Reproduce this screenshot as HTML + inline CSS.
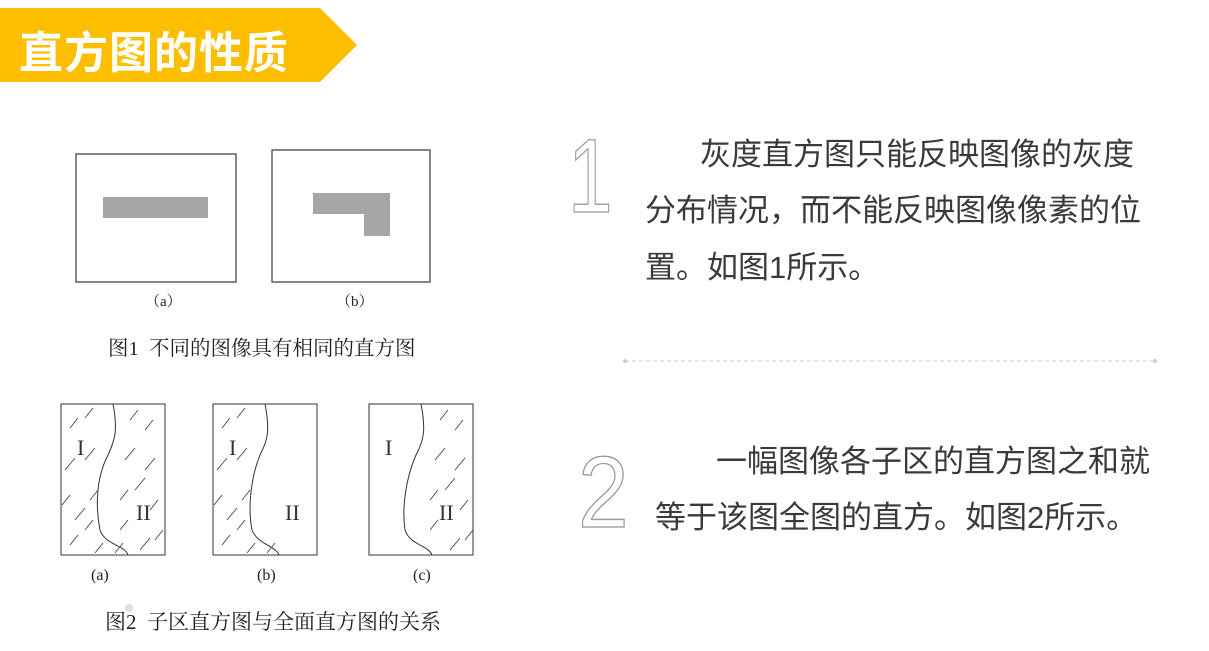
<!DOCTYPE html>
<html><head><meta charset="utf-8"><style>
body{margin:0;width:1209px;height:651px;background:#fff;position:relative;overflow:hidden;font-family:"Liberation Sans","Noto Sans CJK SC",sans-serif}
.t{position:absolute;white-space:nowrap}
.p{font-size:31px;color:#3a3a3a;line-height:31px}
.c{font-family:"Liberation Serif","Noto Serif CJK SC",serif;color:#222}
</style></head><body>
<svg width="1209" height="651" style="position:absolute;left:0;top:0">
<polygon points="0,8 320,8 357,45 320,82 0,82" fill="#FDBE00"/>
<g fill="none" stroke="#444" stroke-width="1.3">
<rect x="76" y="154" width="160" height="128"/>
<rect x="272" y="150" width="158" height="132"/>
</g>
<rect x="103" y="197" width="105" height="21" fill="#a6a6a6"/>
<rect x="313" y="193" width="51" height="21" fill="#a6a6a6"/>
<rect x="364" y="193" width="26" height="43" fill="#a6a6a6"/>
<g fill="none" stroke="#333" stroke-width="1">
<rect x="61" y="404" width="104" height="151"/>
<rect x="213" y="404" width="104" height="151"/>
<rect x="369" y="404" width="104" height="151"/>
<path d="M113,404 C118,430 115,440 108,455 C95,480 96,510 100,530 C105,545 125,545 128,555"/>
<path d="M265,404 C270,430 268,440 260,455 C250,480 248,510 252,530 C258,545 275,545 279,555"/>
<path d="M421,404 C426,430 424,440 416,455 C405,480 402,510 405,530 C410,545 428,545 432,555"/>
</g>
<g stroke="#444" stroke-width="0.9">
<path d="M70,428 l8,-10 M85,418 l8,-10 M65,470 l10,-12 M85,460 l10,-12 M62,505 l8,-10 M75,520 l10,-12 M90,500 l8,-10 M70,545 l8,-10 M85,530 l8,-10 M130,420 l8,-10 M145,430 l8,-10 M125,460 l10,-12 M145,470 l10,-12 M120,500 l8,-10 M135,490 l10,-12 M150,510 l8,-10 M120,530 l8,-10 M140,550 l10,-12 M155,540 l8,-10 M95,553 l8,-10 M115,553 l8,-10"/>
<path d="M222,428 l8,-10 M237,418 l8,-10 M217,470 l10,-12 M237,460 l10,-12 M214,505 l8,-10 M227,520 l10,-12 M242,500 l8,-10 M222,545 l8,-10 M237,530 l8,-10 M247,553 l8,-10 M267,553 l8,-10"/>
<path d="M440,420 l8,-10 M455,430 l8,-10 M435,460 l10,-12 M455,470 l10,-12 M430,500 l8,-10 M445,490 l10,-12 M460,510 l8,-10 M430,530 l8,-10 M450,550 l10,-12 M465,540 l8,-10"/>
</g>
<g font-family="Liberation Serif,serif" font-size="22" fill="#333">
<text x="77" y="455">I</text><text x="229" y="455">I</text><text x="385" y="455">I</text>
<text x="136" y="520">II</text><text x="285" y="520">II</text><text x="439" y="520">II</text>
</g>
<line x1="625" y1="361" x2="1155" y2="361" stroke="#ccc" stroke-dasharray="4,3"/>
<circle cx="625" cy="361" r="2" fill="#ccc"/><circle cx="1155" cy="361" r="2" fill="#ccc"/>
<circle cx="129" cy="608" r="4" fill="#dde"/>
<text transform="translate(568,212) scale(0.8,1.05)" font-size="100" font-family="Liberation Sans,sans-serif" fill="none" stroke="#999" stroke-width="1.3">1</text>
<text transform="translate(578,527) scale(0.95,1.05)" font-size="96" font-family="Liberation Sans,sans-serif" fill="none" stroke="#999" stroke-width="1.3">2</text>
</svg>
<div class="t" style="left:19px;top:17px;font-size:44px;font-weight:bold;color:#fff;letter-spacing:1px">直方图的性质</div>
<div class="t c" style="left:145px;top:290px;font-size:15px">（a）</div>
<div class="t c" style="left:336px;top:290px;font-size:15px">（b）</div>
<div class="t c" style="left:108px;top:331px;font-size:20.5px">图1&nbsp; 不同的图像具有相同的直方图</div>
<div class="t c" style="left:91px;top:567px;font-size:16px">(a)</div>
<div class="t c" style="left:257px;top:567px;font-size:16px">(b)</div>
<div class="t c" style="left:413px;top:567px;font-size:16px">(c)</div>
<div class="t c" style="left:105px;top:606px;font-size:21px">图2&nbsp; 子区直方图与全面直方图的关系</div>
<div class="t p" style="left:700px;top:139px">灰度直方图只能反映图像的灰度</div>
<div class="t p" style="left:645px;top:195px">分布情况，而不能反映图像像素的位</div>
<div class="t p" style="left:645px;top:252px">置。如图1所示。</div>
<div class="t p" style="left:716px;top:446px">一幅图像各子区的直方图之和就</div>
<div class="t p" style="left:655px;top:502px">等于该图全图的直方。如图2所示。</div>
</body></html>
